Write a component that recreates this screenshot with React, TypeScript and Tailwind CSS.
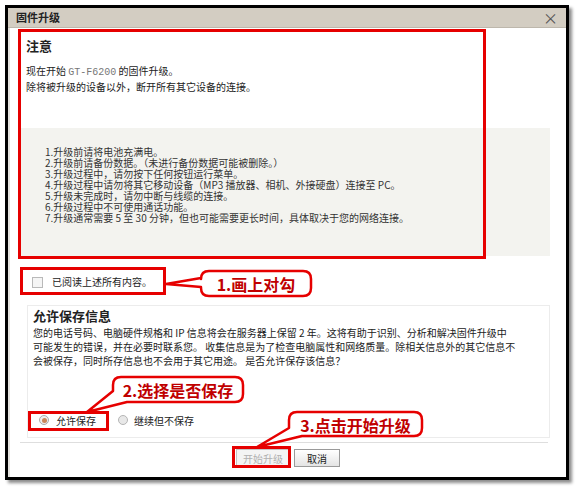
import React from "react";

const font = { fontFamily: '"Noto Sans CJK SC", "Liberation Sans", sans-serif' };

const steps = [
  "1.升级前请将电池充满电。",
  "2.升级前请备份数据。（未进行备份数据可能被删除。）",
  "3.升级过程中，请勿按下任何按钮运行菜单。",
  "4.升级过程中请勿将其它移动设备（MP3 播放器、相机、外接硬盘）连接至 PC。",
  "5.升级未完成时，请勿中断与线缆的连接。",
  "6.升级过程中不可使用通话功能。",
  "7.升级通常需要 5 至 30 分钟，但也可能需要更长时间，具体取决于您的网络连接。",
];

const Callout = ({ left, top, width, children }: { left: number; top: number; width: number; children: React.ReactNode }) => (
  <div
    className="absolute flex items-center justify-center text-[16px] font-bold text-[#c00000] leading-none"
    style={{ left, top, width, height: 25 }}
  >
    {children}
  </div>
);

const App: React.FC = () => {
  return (
    <div className="relative w-[578px] h-[490px] bg-white overflow-hidden text-[#222]" style={font}>
      <div className="pt-[5px] pl-[5px]">
        <div className="w-[564px] h-[475px] border-[3px] border-black bg-white flex flex-col shadow-[3px_3px_3px_rgba(0,0,0,0.45)]">
          {/* title bar */}
          <div className="h-[20px] bg-[#d3cdc2] flex items-center justify-between pl-[8px] pr-[8px] border-b border-[#bdb7ac]">
            <span className="text-[11px] font-bold leading-none">固件升级</span>
            <span className="text-[15px] leading-none text-[#555]">×</span>
          </div>

          {/* body */}
          <div className="flex-1 pl-[10px] pr-[18px] border-l-[2px] border-[#e4e2de]">
            <div className="w-[530px] pt-[9px]">
              <div className="pl-[6px]">
                <div className="text-[13px] font-bold leading-[18px]">注意</div>
                <div className="mt-[9px] text-[10px] leading-[14px] whitespace-nowrap">
                  <div>
                    现在开始 <span className="text-[#777]" style={{ fontFamily: '"Liberation Mono", monospace' }}>GT-F6200</span> 的固件升级。
                  </div>
                  <div>除将被升级的设备以外，断开所有其它设备的连接。</div>
                </div>
              </div>
              <div className="mt-[34px] h-[128px] bg-[#f3f3ef] pt-[18px] pl-[25px] text-[10px] leading-[11px] whitespace-nowrap text-[#333]">
                {steps.map((s) => (
                  <div key={s} className="h-[11px]">{s}</div>
                ))}
              </div>
            </div>

            {/* confirm checkbox */}
            <div className="mt-[13px] h-[26px] flex items-center pl-[12px] gap-[9px]">
              <div className="w-[11px] h-[11px] border border-[#b9b9b9] bg-[#f5f5f5]" />
              <span className="text-[10px] leading-none">已阅读上述所有内容。</span>
            </div>

            {/* allow save section */}
            <div className="mt-[10px] ml-[7px] w-[523px] border border-[#ececec] pt-[1px] pl-[5px] pb-[8px]">
              <div className="text-[13px] font-bold leading-[18px]">允许保存信息</div>
              <div className="mt-[1px] text-[10px] leading-[14px] whitespace-nowrap">
                <div>您的电话号码、电脑硬件规格和 IP 信息将会在服务器上保留 2 年。这将有助于识别、分析和解决固件升级中</div>
                <div>可能发生的错误，并在必要时联系您。 收集信息是为了检查电脑属性和网络质量。除相关信息外的其它信息不</div>
                <div>会被保存，同时所存信息也不会用于其它用途。 是否允许保存该信息？</div>
              </div>
              <div className="mt-[43px] h-[18px] flex items-center pl-[6px] text-[10px]">
                <div className="w-[10px] h-[10px] rounded-full border border-[#a9a9a9] bg-[#eee] flex items-center justify-center">
                  <div className="w-[5px] h-[5px] rounded-full bg-[#c9875a]" />
                </div>
                <span className="ml-[7px]">允许保存</span>
                <div className="ml-[22px] w-[10px] h-[10px] rounded-full border border-[#b5b5b5] bg-[#e8e8e8]" />
                <span className="ml-[6px]">继续但不保存</span>
              </div>
            </div>

            <div className="mt-[4px] h-px bg-[#dedede]" />

            {/* buttons */}
            <div className="mt-[6px] flex gap-[4px] pl-[216px]">
              <div className="w-[54px] h-[18px] border border-[#c4c4c4] bg-[#f4f4f4] flex items-center justify-center text-[10px] text-[#b0b0b0]">
                开始升级
              </div>
              <div className="w-[46px] h-[18px] border border-[#9a9a9a] bg-gradient-to-b from-white to-[#e4e4e4] flex items-center justify-center text-[10px]">
                取消
              </div>
            </div>
          </div>
        </div>
      </div>

      {/* annotations */}
      <svg className="absolute inset-0 pointer-events-none" width="578" height="490">
        <g fill="none" stroke="#e60000" strokeWidth="3">
          <rect x="19.5" y="30.5" width="465" height="227" />
          <rect x="21.5" y="268.5" width="143" height="25" />
          <rect x="29.5" y="412.5" width="78" height="17" />
          <rect x="233.5" y="447.5" width="56" height="19" />
        </g>
        <g fill="white" stroke="#e60000" strokeWidth="2.5" strokeLinejoin="round">
          <path d="M209 271 H303 Q311 271 311 279 V288 Q311 296 303 296 H209 Q201 296 201 288 V287 L166 284 L201 278 V279 Q201 271 209 271 Z" />
          <path d="M121 377 H235 Q243 377 243 385 V394 Q243 402 235 402 H127 L87 412 L113 391 V385 Q113 377 121 377 Z" />
          <path d="M297 412 H414 Q422 412 422 420 V428 Q422 436 414 436 H302 L257 447 L289 428 V420 Q289 412 297 412 Z" />
        </g>
      </svg>
      <Callout left={201} top={271} width={110}>1.画上对勾</Callout>
      <Callout left={113} top={377} width={130}>2.选择是否保存</Callout>
      <Callout left={289} top={412} width={133}>3.点击开始升级</Callout>
    </div>
  );
};

export default App;
